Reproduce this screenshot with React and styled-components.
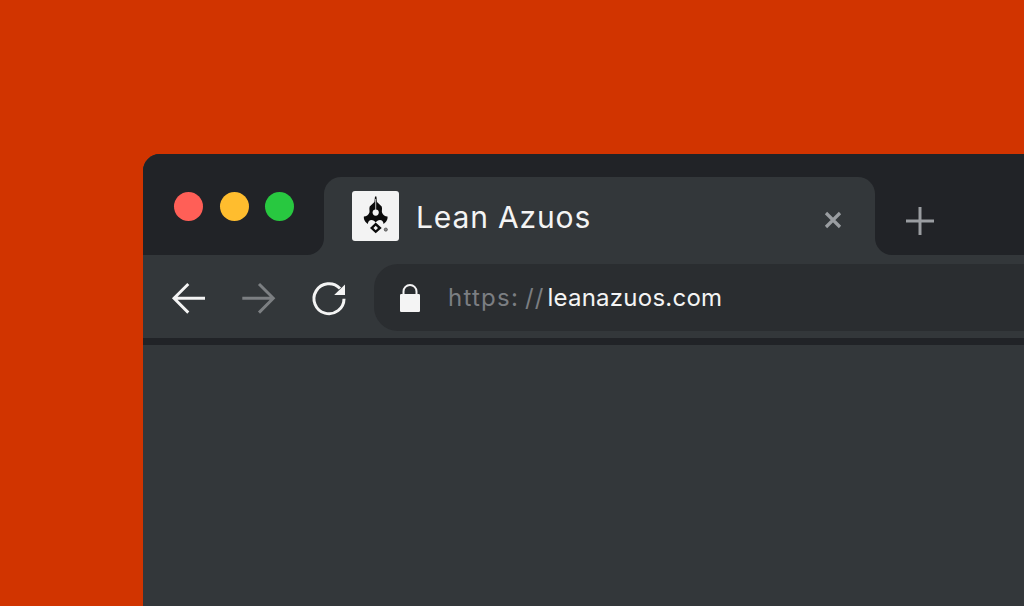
import React from "react";
import styled, { createGlobalStyle } from "styled-components";

const Global = createGlobalStyle`
  html, body { margin: 0; padding: 0; height: 100%; overflow: hidden; background: #d13400; }
  #root { height: 100%; }
`;

const Stage = styled.div`
  width: 1024px;
  height: 606px;
  overflow: hidden;
  background: #d13400;
  padding: 154px 0 0 143px;
  box-sizing: border-box;
`;

const Win = styled.div`
  width: 960px;
  height: 520px;
  border-radius: 17px 17px 0 0;
  overflow: hidden;
  background: #33373a;
  display: flex;
  flex-direction: column;
  font-family: Inter, "Liberation Sans", sans-serif;
`;

const TitleBar = styled.div`
  height: 101px;
  display: flex;
  flex: none;
  background: #33373a;
`;

const LeftCap = styled.div`
  width: 181px;
  box-sizing: border-box;
  padding: 4px 0 0 31px;
  display: flex;
  align-items: center;
  gap: 16.5px;
  background: #212327;
  border-bottom-right-radius: 17px;
`;

const Dot = styled.span`
  width: 29px;
  height: 29px;
  border-radius: 50%;
  background: ${(p) => p.$color};
`;

const TabSlot = styled.div`
  width: 551px;
  padding-top: 23px;
  box-sizing: border-box;
  background: #212327;
  display: flex;
`;

const Tab = styled.div`
  flex: 1;
  display: flex;
  align-items: center;
  padding: 0 32px 0 28px;
  background: #33373a;
  border-radius: 17px 17px 0 0;
`;

const Favicon = styled.svg`
  width: 47px;
  height: 50px;
  flex: none;
  display: block;
`;

const TabTitle = styled.span`
  margin: 2px 0 0 17px;
  font-size: 30px;
  line-height: 36px;
  letter-spacing: 0.85px;
  color: #f4f4f4;
  font-weight: 400;
  white-space: nowrap;
`;

const CloseIcon = styled.svg`
  width: 20px;
  height: 20px;
  margin: 8px 0 0 auto;
`;

const RightCap = styled.div`
  flex: 1;
  display: flex;
  align-items: flex-end;
  padding: 0 0 18px 29px;
  background: #212327;
  border-bottom-left-radius: 17px;
`;

const PlusIcon = styled.svg`
  width: 32px;
  height: 32px;
`;

const Toolbar = styled.div`
  height: 83px;
  box-sizing: border-box;
  padding: 9px 0 7px 26px;
  display: flex;
  align-items: center;
  gap: 30px;
  flex: none;
  background: #33373a;
`;

const NavIcon = styled.svg`
  width: 40px;
  height: 40px;
  flex: none;
  display: block;
`;

const AddressBar = styled.div`
  flex: 1;
  height: 67px;
  margin-left: -5px;
  border-radius: 24px 0 0 24px;
  background: #2a2d30;
  display: flex;
  align-items: center;
  padding-left: 24px;
`;

const LockIcon = styled.svg`
  width: 24px;
  height: 30px;
  flex: none;
  display: block;
`;

const Url = styled.div`
  margin-left: 26px;
  font-size: 24px;
  letter-spacing: 0.25px;
  white-space: nowrap;
  color: #f4f4f4;
`;

const Scheme = styled.span`
  color: #7b7e82;
  letter-spacing: 1.25px;
`;

const Slashes = styled.span`
  color: #7b7e82;
  letter-spacing: 1px;
  margin: 0 3px 0 6px;
`;

const Divider = styled.div`
  height: 7px;
  flex: none;
  background: #212327;
`;

const Content = styled.div`
  flex: 1;
  background: #33373a;
`;

export default function App() {
  return (
    <Stage>
      <Global />
      <Win>
        <TitleBar>
          <LeftCap>
            <Dot $color="#ff5f57" />
            <Dot $color="#ffbd2e" />
            <Dot $color="#28c840" />
          </LeftCap>
          <TabSlot>
            <Tab>
              <Favicon viewBox="0 0 47 50">
                <rect width="47" height="50" rx="3" fill="#f3f3f3" />
                <path
                  fill="#0b0b0b"
                  d="M23 5.5 H24.4 L25 11 L29.7 15.5 C30.5 18 29.5 20 30 21.5 C31 24 33 25.5 35.5 25.5 C36 28.5 34 31.5 31.5 33 C31.5 30.5 29.8 29 28 29 C26 29 24.7 30 23.7 31.5 C22.7 30 21.4 29 19.4 29 C17.6 29 15.9 30.5 15.9 33 C13.4 31.5 11.4 28.5 11.9 25.5 C14.4 25.5 16.4 24 17.4 21.5 C17.9 20 16.9 18 17.7 15.5 L22.4 11 Z"
                />
                <path d="M23.7 8 V19" stroke="#f3f3f3" strokeWidth="0.8" fill="none" />
                <circle cx="23.7" cy="21.6" r="3.1" fill="#f3f3f3" />
                <path
                  fillRule="evenodd"
                  fill="#0b0b0b"
                  d="M23.7 31.5 L29.7 37 L23.7 42.3 L18 37 Z M23.7 34.8 L21.4 37 L23.7 39.2 L26 37 Z"
                />
                <circle cx="33.8" cy="38.6" r="1.6" fill="#8a8a8a" stroke="#333" strokeWidth="0.6" />
              </Favicon>
              <TabTitle>Lean Azuos</TabTitle>
              <CloseIcon viewBox="0 0 20 20">
                <path d="M3 3 L17 17 M17 3 L3 17" stroke="#9a9da1" strokeWidth="3.2" fill="none" />
              </CloseIcon>
            </Tab>
          </TabSlot>
          <RightCap>
            <PlusIcon viewBox="0 0 32 32">
              <path d="M16 2 V30 M2 16 H30" stroke="#9a9da1" strokeWidth="3" fill="none" />
            </PlusIcon>
          </RightCap>
        </TitleBar>
        <Toolbar>
          <NavIcon viewBox="0 0 40 40">
            <path d="M36 20.3 H5 M19.3 6 L5 20.3 L19.3 34.6" stroke="#f4f4f4" strokeWidth="2.9" fill="none" />
          </NavIcon>
          <NavIcon viewBox="0 0 40 40">
            <path d="M3.3 20.3 H34 M20 6 L34.3 20.3 L20 34.6" stroke="#7c7f82" strokeWidth="2.9" fill="none" />
          </NavIcon>
          <NavIcon viewBox="0 0 40 40">
            <path d="M31 10.5 A15 15 0 1 0 35 20.7" stroke="#f4f4f4" strokeWidth="3" fill="none" />
            <path d="M36 6.5 V17 H25.2 Z" fill="#f4f4f4" />
          </NavIcon>
          <AddressBar>
            <LockIcon viewBox="0 0 24 30">
              <path d="M5.5 12 V8.5 A6.5 6.5 0 0 1 18.5 8.5 V12" stroke="#f4f4f4" strokeWidth="2" fill="none" />
              <rect x="2" y="11" width="20" height="18" rx="1.2" fill="#f4f4f4" />
            </LockIcon>
            <Url>
              <Scheme>https:</Scheme>
              <Slashes>//</Slashes>leanazuos.com
            </Url>
          </AddressBar>
        </Toolbar>
        <Divider />
        <Content />
      </Win>
    </Stage>
  );
}
